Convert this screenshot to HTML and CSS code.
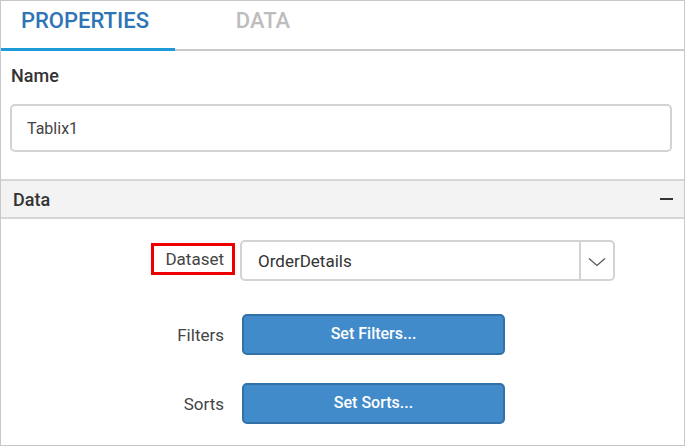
FILE: index.html
```html
<!DOCTYPE html>
<html>
<head>
<meta charset="utf-8">
<link rel="stylesheet" href="styles.css">
</head>
<body>
<div class="panel">
  <div class="tabs">
    <div class="tab active">PROPERTIES</div>
    <div class="tab">DATA</div>
    <div class="tab-rest"></div>
  </div>
  <div class="name-section">
    <div class="section-label">Name</div>
    <div class="text-input">Tablix1</div>
  </div>
  <div class="group-header">
    <span class="group-title">Data</span>
    <span class="collapse-icon"></span>
  </div>
  <div class="group-body">
    <div class="row row-dataset">
      <div class="label-cell"><span class="label highlighted">Dataset</span></div>
      <div class="dropdown">
        <span class="dropdown-value">OrderDetails</span>
        <span class="dropdown-btn">
          <svg width="18" height="10" viewBox="0 0 18 10"><path d="M1 1.5 L9 8.5 L17 1.5" fill="none" stroke="#555" stroke-width="1.2"/></svg>
        </span>
      </div>
    </div>
    <div class="row row-filters">
      <div class="label-cell"><span class="label">Filters</span></div>
      <button class="btn">Set Filters...</button>
    </div>
    <div class="row row-sorts">
      <div class="label-cell"><span class="label">Sorts</span></div>
      <button class="btn">Set Sorts...</button>
    </div>
  </div>
</div>
</body>
</html>
```
FILE: styles.css
```css
* { box-sizing: border-box; }
html, body { margin: 0; padding: 0; background: #fff; }
body { font-family: Roboto, "Noto Sans", Arial, sans-serif; color: #333; }

.panel {
  width: 685px;
  height: 446px;
  border: 1px solid #c8c8c8;
  overflow: hidden;
}

.tabs {
  display: flex;
  height: 50px;
}
.tab {
  width: 176px;
  height: 50px;
  display: flex;
  align-items: center;
  justify-content: center;
  padding-bottom: 9px;
  font-size: 22px;
  font-weight: 500;
  color: #bdbdbd;
  border-bottom: 2px solid #cacaca;
}
.tab.active {
  width: 174px;
  color: #2f74b5;
  border-bottom: 3px solid #1d9ad8;
  padding-bottom: 8px;
  padding-right: 6px;
}
.tab-rest {
  flex: 1;
  border-bottom: 2px solid #cacaca;
}

.name-section {
  padding: 14px 12px 27px 9px;
}
.section-label {
  font-size: 18px;
  font-weight: 500;
  color: #333;
  line-height: 22px;
  padding-left: 1px;
}
.text-input {
  margin-top: 17px;
  height: 48px;
  border: 2px solid #d3d3d3;
  border-radius: 5px;
  padding-left: 15px;
  display: flex;
  align-items: center;
  font-size: 16px;
  color: #444;
}

.group-header {
  height: 40px;
  background: #f3f3f3;
  border-top: 2px solid #d6d6d6;
  border-bottom: 2px solid #d6d6d6;
  display: flex;
  align-items: center;
  justify-content: space-between;
  padding: 0 11px 0 12px;
}
.group-title {
  font-size: 18px;
  font-weight: 500;
  color: #333;
}
.collapse-icon {
  width: 13px;
  height: 2px;
  background: #333;
}

.group-body {
  padding-top: 21px;
}
.row {
  display: flex;
  align-items: center;
}
.label-cell {
  width: 235px;
  display: flex;
  justify-content: flex-end;
}
.label {
  font-size: 17px;
  line-height: 20px;
  color: #444;
  padding-right: 12px;
}
.label.highlighted {
  border: 3px solid #ee0000;
  padding: 3px 8px 3px 11px;
  margin-bottom: 4px;
}

.row-dataset .label-cell { width: 234px; }
.dropdown {
  margin-left: 5px;
  width: 375px;
  height: 41px;
  border: 2px solid #d3d3d3;
  border-radius: 5px;
  display: flex;
  align-items: center;
}
.dropdown-value {
  flex: 1;
  padding-left: 16px;
  font-size: 17px;
  color: #333;
}
.dropdown-btn {
  width: 34px;
  height: 100%;
  border-left: 2px solid #d3d3d3;
  display: flex;
  align-items: center;
  justify-content: center;
  padding-top: 2px;
}

.row-filters { margin-top: 33px; }
.row-sorts { margin-top: 28px; }
.btn {
  margin-left: 6px;
  width: 263px;
  height: 41px;
  background: #428bca;
  border: 2px solid #3271a8;
  border-radius: 5px;
  color: #fff;
  font-family: Roboto, "Noto Sans", Arial, sans-serif;
  font-size: 16px;
  font-weight: 500;
  padding: 0 0 2px 0;
}
```
